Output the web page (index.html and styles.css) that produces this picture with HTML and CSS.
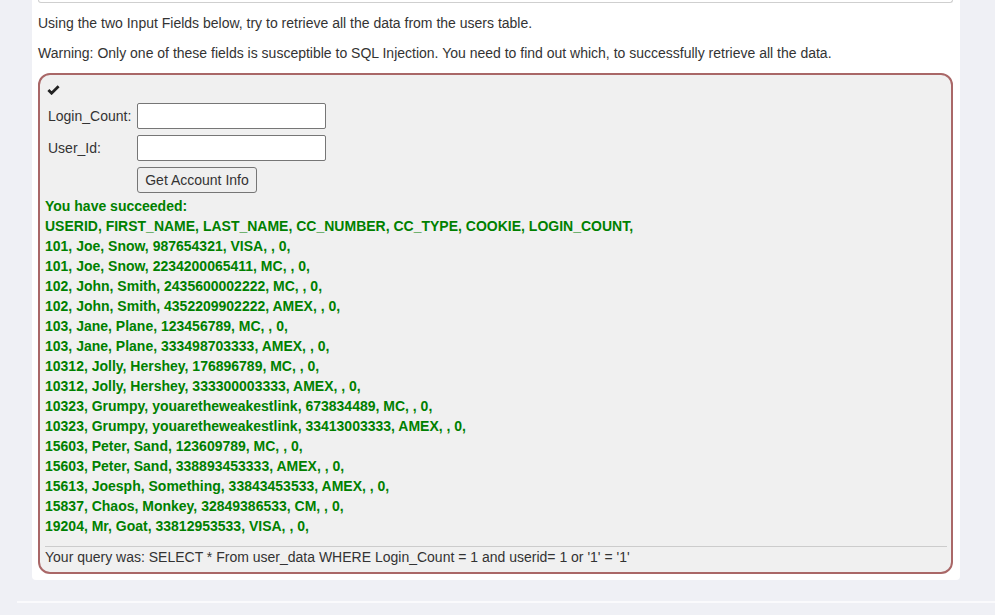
FILE: index.html
```html
<!DOCTYPE html>
<html>
<head>
<meta charset="utf-8">
<link rel="stylesheet" href="styles.css">
</head>
<body>
<div class="panel">
  <div class="top-box"></div>
  <p class="intro">Using the two Input Fields below, try to retrieve all the data from the users table.</p>
  <p class="intro">Warning: Only one of these fields is susceptible to SQL Injection. You need to find out which, to successfully retrieve all the data.</p>
  <div class="attack">
    <div class="check">
      <svg width="13" height="10" viewBox="0 0 13 10"><polyline points="1.4,5 4.6,8.2 11.6,1.3" fill="none" stroke="#222" stroke-width="2.8"/></svg>
    </div>
    <div class="form">
      <label class="lbl">Login_Count:</label>
      <input class="field" type="text">
      <label class="lbl">User_Id:</label>
      <input class="field" type="text">
      <span></span>
      <button class="btn">Get Account Info</button>
    </div>
    <div class="feedback">
      You have succeeded:<br>
      USERID, FIRST_NAME, LAST_NAME, CC_NUMBER, CC_TYPE, COOKIE, LOGIN_COUNT, <br>
      101, Joe, Snow, 987654321, VISA, , 0, <br>
      101, Joe, Snow, 2234200065411, MC, , 0, <br>
      102, John, Smith, 2435600002222, MC, , 0, <br>
      102, John, Smith, 4352209902222, AMEX, , 0, <br>
      103, Jane, Plane, 123456789, MC, , 0, <br>
      103, Jane, Plane, 333498703333, AMEX, , 0, <br>
      10312, Jolly, Hershey, 176896789, MC, , 0, <br>
      10312, Jolly, Hershey, 333300003333, AMEX, , 0, <br>
      10323, Grumpy, youaretheweakestlink, 673834489, MC, , 0, <br>
      10323, Grumpy, youaretheweakestlink, 33413003333, AMEX, , 0, <br>
      15603, Peter, Sand, 123609789, MC, , 0, <br>
      15603, Peter, Sand, 338893453333, AMEX, , 0, <br>
      15613, Joesph, Something, 33843453533, AMEX, , 0, <br>
      15837, Chaos, Monkey, 32849386533, CM, , 0, <br>
      19204, Mr, Goat, 33812953533, VISA, , 0,
    </div>
    <div class="query">Your query was: SELECT * From user_data WHERE Login_Count = 1 and userid= 1 or '1' = '1'</div>
  </div>
</div>
<div class="footer"></div>
</body>
</html>
```

FILE: styles.css
```css
html, body {
  margin: 0;
  padding: 0;
}
body {
  background: #eff0f5;
  font-family: "Liberation Sans", Arial, sans-serif;
  font-size: 14px;
  line-height: 20px;
  color: #333;
  height: 615px;
  overflow: hidden;
}
.panel {
  margin-left: 32px;
  width: 915px;
  padding: 0 7px 6px 6px;
  background: #fff;
  border-radius: 0 0 4px 4px;
}
.top-box {
  height: 2px;
  border: 1px solid #cfcfcf;
  border-top: none;
  border-radius: 0 0 4px 4px;
}
.intro {
  margin: 10px 0 10px 0;
}
.intro + .intro {
  margin-top: 0;
}
.attack {
  border: 2px solid #a96767;
  border-radius: 12px;
  background: #f0f0f0;
  padding: 0 4px 5px 5px;
}
.check {
  height: 28px;
  padding-left: 2px;
  box-sizing: border-box;
  padding-top: 10px;
}
.check svg {
  display: block;
}
.form {
  display: grid;
  grid-template-columns: 89px 189px;
  row-gap: 6px;
  margin-left: 3px;
  align-items: center;
}
.lbl {
  color: #333;
}
.field {
  box-sizing: border-box;
  height: 26px;
  width: 189px;
  border: 1px solid #767676;
  border-radius: 2px;
  background: #fff;
  margin: 0;
  padding: 1px 2px;
  font: 14px "Liberation Sans", Arial, sans-serif;
}
.btn {
  justify-self: start;
  box-sizing: border-box;
  height: 26px;
  width: 120px;
  margin: 0;
  padding: 0;
  border: 1px solid #767676;
  border-radius: 3px;
  background: #efefef;
  font: 14px "Liberation Sans", Arial, sans-serif;
  color: #333;
}
.feedback {
  margin-top: 3px;
  color: #008000;
  font-weight: bold;
}
.query {
  margin-top: 10px;
  border-top: 1px solid #cccccc;
}
.footer {
  margin: 21px 0 0 17px;
  border-top: 2px solid #fafafc;
}
```
